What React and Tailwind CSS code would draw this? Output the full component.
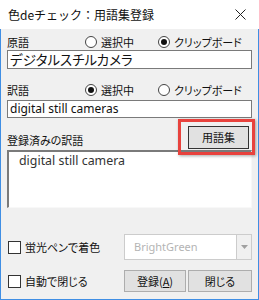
import React from "react";

const jp = { fontFamily: '"Noto Sans CJK JP", "Noto Sans", sans-serif' };
const lat = { fontFamily: '"Noto Sans", "Noto Sans CJK JP", sans-serif' };

function Radio({ checked, label }) {
  return (
    <div className="flex items-center gap-[4px] whitespace-nowrap">
      <div className="w-[12px] h-[12px] rounded-full border border-[#444] bg-white flex items-center justify-center">
        {checked && <div className="w-[6px] h-[6px] rounded-full bg-[#111]" />}
      </div>
      <span className="text-[11px] leading-none text-[#111]">{label}</span>
    </div>
  );
}

function Check({ label }) {
  return (
    <div className="flex items-center gap-[4px] whitespace-nowrap">
      <div className="w-[13px] h-[13px] border border-[#333] bg-white" />
      <span className="text-[11px] leading-none text-[#111]">{label}</span>
    </div>
  );
}

function Btn({ children, className = "" }) {
  return (
    <div
      className={
        "border bg-[#e1e1e1] flex items-center justify-center text-[11px] text-[#111] whitespace-nowrap " +
        className
      }
    >
      {children}
    </div>
  );
}

export default function App() {
  return (
    <div
      className="w-[259px] h-[300px] flex flex-col bg-[#f0f0f0] overflow-hidden [font-feature-settings:'palt']"
      style={jp}
    >
      <div className="h-[29px] bg-white flex items-center justify-between pl-[8px] pr-[13px] shrink-0 [font-feature-settings:normal]">
        <span className="text-[12px] text-[#111]">色deチェック：用語集登録</span>
        <svg width="11" height="11" viewBox="0 0 11 11">
          <path d="M0.5 0.5 L10.5 10.5 M10.5 0.5 L0.5 10.5" stroke="#222" strokeWidth="1" />
        </svg>
      </div>
      <div className="flex-1 flex flex-col px-[6px] pt-[6px] border-l border-r border-b border-[#3f8ee4]">
        <div className="h-[14px] flex items-center">
          <span className="w-[78px] text-[11px] leading-none text-[#111]">原語</span>
          <div className="w-[73px]"><Radio label="選択中" /></div>
          <Radio checked label="クリップボード" />
        </div>
        <div className="mt-[1px] h-[19px] bg-white border border-[#7a7a7a] flex items-center pl-[2px] text-[13.5px] text-[#111]">
          デジタルスチルカメラ
        </div>
        <div className="mt-[14px] h-[14px] flex items-center">
          <span className="w-[78px] text-[11px] leading-none text-[#111]">訳語</span>
          <div className="w-[73px]"><Radio checked label="選択中" /></div>
          <Radio label="クリップボード" />
        </div>
        <div className="mt-[3px] h-[18px] bg-white border border-[#7a7a7a] flex items-center pl-[2px] text-[12px] text-[#111]" style={lat}>
          digital still cameras
        </div>
        <div className="flex items-end justify-between h-[32px]">
          <span className="text-[11px] leading-none text-[#111] mb-[4px]">登録済みの訳語</span>
          <div className="relative w-[61px] h-[23px] mr-[3px] mb-[1px]">
            <div className="absolute -left-[10px] -top-[7px] -right-[6px] -bottom-[6px] border-[3px] border-[#e8423d] shadow-[1px_1px_3px_rgba(0,0,0,0.35)] z-10" />
            <Btn className="w-full h-full border-[#333]">用語集</Btn>
          </div>
        </div>
        <div className="h-[58px] bg-white border-l-2 border-t-2 border-l-[#7a7a7a] border-t-[#7a7a7a] border-r border-b border-r-[#f8f8f8] border-b-[#f8f8f8] pl-[10px] pt-[1px] text-[12.4px] text-[#333] leading-[16px]" style={lat}>
          digital still camera
        </div>
        <div className="mt-[26px] flex items-center justify-between h-[26px]">
          <div className="pl-[1px]"><Check label="蛍光ペンで着色" /></div>
          <div className="w-[128px] h-[26px] border border-[#ccc] bg-white flex items-center">
            <span className="flex-1 pl-[9px] text-[11px] text-[#b4b4b4]" style={lat}>BrightGreen</span>
            <div className="w-[15px] h-[24px] bg-[#f0f0f0] border-l border-[#ccc] flex items-center justify-center">
              <svg width="7" height="4" viewBox="0 0 7 4"><path d="M0 0 L7 0 L3.5 4 Z" fill="#a0a0a0" /></svg>
            </div>
          </div>
        </div>
        <div className="mt-[10px] flex items-center justify-between h-[22px]">
          <div className="pl-[1px]"><Check label="自動で閉じる" /></div>
          <div className="flex gap-[2px]">
            <Btn className="w-[62px] h-[22px] border-[#adadad]">登録(<span className="underline">A</span>)</Btn>
            <Btn className="w-[64px] h-[22px] border-[#adadad]">閉じる</Btn>
          </div>
        </div>
      </div>
    </div>
  );
}
